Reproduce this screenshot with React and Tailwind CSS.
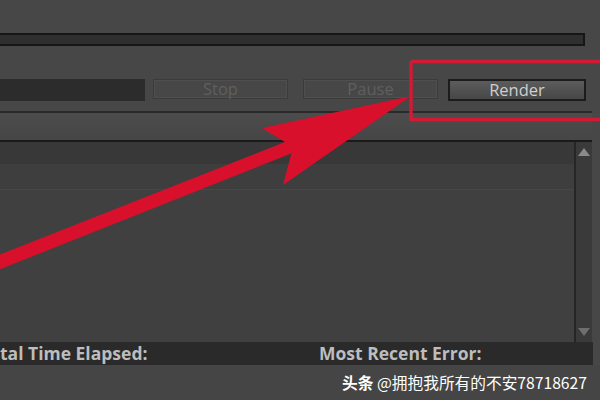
import React from "react";

const ui = { fontFamily: '"Open Sans", "DejaVu Sans", sans-serif' };

const GhostButton = ({ label }) => (
  <div className="w-[135px] h-[20px] border border-[#3b3b3b] shadow-[inset_0_0_0_1px_#4f4f4f] flex items-center justify-center text-[16.5px] leading-none text-[#5f5f5f]">
    {label}
  </div>
);

export default function App() {
  return (
    <div
      className="relative w-[600px] h-[400px] overflow-hidden bg-[#474747] flex flex-col"
      style={ui}
    >
      {/* top strip */}
      <div className="h-[33px] shrink-0" />

      {/* progress bar */}
      <div className="h-[13px] shrink-0 flex">
        <div className="w-[585px] h-full border-t-2 border-b-2 border-r-2 border-[#161616] bg-[#2f2f2f]" />
      </div>

      {/* controls */}
      <div className="h-[67px] shrink-0 flex items-start pt-[33px] border-b-2 border-[#2a2a2a] w-[592px]">
        <div className="w-[145px] h-[22px] bg-[#2c2c2c]" />
        <div className="ml-[8px]">
          <GhostButton label="Stop" />
        </div>
        <div className="ml-[15px]">
          <GhostButton label="Pause" />
        </div>
        <div className="ml-[10px] w-[138px] h-[22px] border-2 border-[#1c1c1c] bg-gradient-to-b from-[#5c5c5c] to-[#474747] flex items-center justify-center text-[16.5px] leading-none text-[#cfcfcf]">
          Render
        </div>
      </div>

      {/* empty band */}
      <div className="h-[27px] shrink-0 bg-gradient-to-b from-[#4c4c4c] to-[#464646] w-[592px]" />

      {/* queue table */}
      <div className="flex-1 flex w-[592px] border-t-2 border-[#1a1a1a]">
        <div className="flex-1 flex flex-col bg-[#404040]">
          <div className="h-[23px] bg-[#383838] border-b border-[#3e3e3e]" />
          <div className="h-[25px] bg-[#3e3e3e] border-b border-[#474747]" />
          <div className="flex-1" />
        </div>
        <div className="w-[18px] bg-[#3a3a3a] border-l-2 border-[#262626] flex flex-col items-center justify-between py-[6px]">
          <svg width="12" height="8" viewBox="0 0 12 8">
            <path d="M6 0 L12 8 L0 8 Z" fill="#8a8a8a" />
          </svg>
          <svg width="12" height="8" viewBox="0 0 12 8">
            <path d="M0 0 L12 0 L6 8 Z" fill="#6e6e6e" />
          </svg>
        </div>
      </div>

      {/* status bar */}
      <div className="h-[23px] shrink-0 bg-[#2a2a2a] w-[593px] flex items-center text-[17.5px] leading-none font-bold text-[#bdbdbd] overflow-hidden whitespace-nowrap">
        <span className="ml-[-21px] w-[340px] shrink-0">Total Time Elapsed:</span>
        <span>Most Recent Error:</span>
      </div>

      {/* bottom */}
      <div className="h-[35px] shrink-0 bg-[#454545] flex items-center justify-end pr-[13px]">
        <span
          className="text-[15.7px] text-white"
          style={{ fontFamily: '"Noto Sans CJK SC", "Noto Sans", sans-serif' }}
        >
          <span className="font-bold">头条</span> @拥抱我所有的不安78718627
        </span>
      </div>

      {/* red annotation */}
      <svg
        className="absolute inset-0 pointer-events-none"
        width="600"
        height="400"
        viewBox="0 0 600 400"
      >
        <path
          d="M411 61.5 H602 M411 61.5 V119.5 H602"
          fill="none"
          stroke="#d21a35"
          strokeWidth="3.5"
        />
        <path
          d="M-4 256 L290 140 L295 152 L-2 270 Z"
          fill="#d8102c"
        />
        <path
          d="M411 96 L262 128 L293 147 L283 185 Z"
          fill="#d8102c"
        />
      </svg>
    </div>
  );
}
